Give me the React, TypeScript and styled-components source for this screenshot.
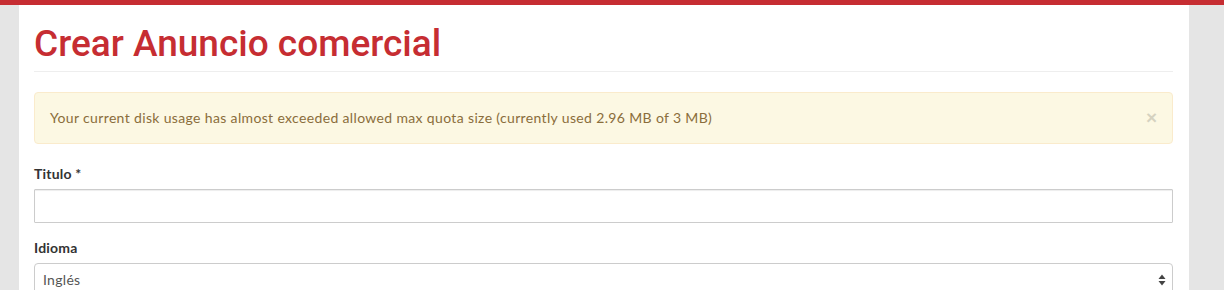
import { createGlobalStyle } from "styled-components";
import styled from "styled-components";

const GlobalStyle = createGlobalStyle`
  html, body {
    margin: 0;
    padding: 0;
    background: #e5e5e5;
  }
  body {
    font-family: "Lato", "Open Sans", sans-serif;
    font-size: 14px;
    line-height: 20px;
    color: #333;
  }
  * {
    box-sizing: border-box;
  }
`;

const TopBar = styled.div`
  height: 5px;
  background: #c62d32;
`;

const Page = styled.div`
  width: 1170px;
  margin-left: 19px;
  background: #fff;
  padding: 0 16px 20px 15px;
  min-height: 285px;
`;

const Header = styled.div`
  padding: 19px 0 7px;
  border-bottom: 1px solid #eee;
  margin-bottom: 20px;
`;

const Title = styled.h1`
  margin: 0;
  font-family: "Roboto", "Liberation Sans", Arial, sans-serif;
  font-weight: 500;
  font-size: 37px;
  line-height: 40px;
  color: #c62d32;
`;

const Alert = styled.div`
  position: relative;
  padding: 15px 35px 15px 15px;
  margin-bottom: 20px;
  border: 1px solid #faebcc;
  border-radius: 4px;
  background: #fcf8e3;
  color: #8a6d3b;
  letter-spacing: 0.35px;
`;

const CloseButton = styled.button`
  position: absolute;
  top: 15px;
  right: 15px;
  padding: 0;
  border: 0;
  background: none;
  font-family: "Liberation Sans", Arial, sans-serif;
  font-size: 19px;
  font-weight: 700;
  line-height: 20px;
  color: #000;
  opacity: 0.15;
  cursor: pointer;
`;

const FormGroup = styled.div`
  margin-bottom: 15px;
`;

const Label = styled.label`
  display: block;
  margin-bottom: 5px;
  font-weight: 700;
  letter-spacing: 0.2px;
`;

const TextInput = styled.input`
  display: block;
  width: 100%;
  height: 34px;
  padding: 6px 8px;
  border: 1px solid #ccc;
  border-radius: 1px;
  background: #fff;
  box-shadow: inset 0 1px 1px rgba(0, 0, 0, 0.075);
  font: inherit;
  color: #555;
`;

const SelectWrap = styled.div`
  position: relative;
`;

const Select = styled.select`
  display: block;
  width: 100%;
  height: 34px;
  padding: 6px 30px 6px 8px;
  border: 1px solid #ccc;
  border-radius: 4px;
  background: #fff;
  appearance: none;
  font: inherit;
  letter-spacing: 0.3px;
  color: #555;
`;

const Arrows = styled.svg`
  position: absolute;
  top: 11px;
  right: 7px;
  pointer-events: none;
`;

export default function App() {
  return (
    <>
      <GlobalStyle />
      <TopBar />
      <Page>
        <Header>
          <Title>Crear Anuncio comercial</Title>
        </Header>
        <Alert>
          Your current disk usage has almost exceeded allowed max quota size
          (currently used 2.96 MB of 3 MB)
          <CloseButton type="button">×</CloseButton>
        </Alert>
        <FormGroup>
          <Label htmlFor="titulo">Titulo *</Label>
          <TextInput id="titulo" type="text" />
        </FormGroup>
        <FormGroup>
          <Label htmlFor="idioma">Idioma</Label>
          <SelectWrap>
            <Select id="idioma" defaultValue="en">
              <option value="en">Inglés</option>
              <option value="es">Español</option>
            </Select>
            <Arrows width="8" height="12" viewBox="0 0 8 12">
              <path d="M4 0.5 L7.5 5 H0.5 Z" fill="#444" />
              <path d="M4 11.5 L7.5 7 H0.5 Z" fill="#444" />
            </Arrows>
          </SelectWrap>
        </FormGroup>
      </Page>
    </>
  );
}
